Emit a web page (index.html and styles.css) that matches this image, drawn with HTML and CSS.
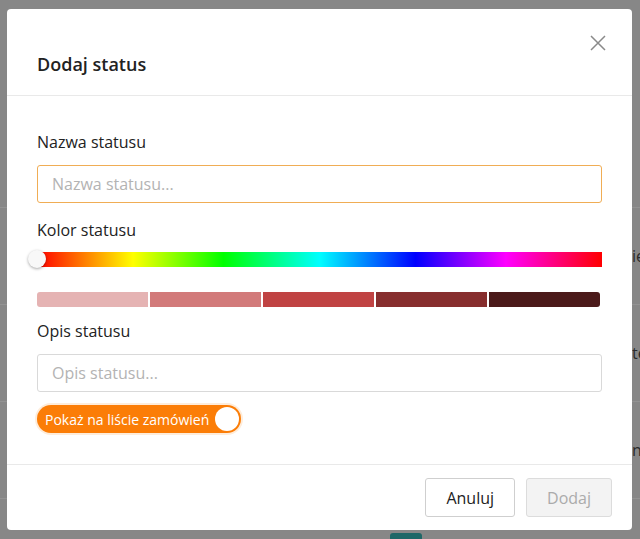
FILE: index.html
```html
<!DOCTYPE html>
<html lang="pl">
<head>
    <meta charset="UTF-8">
    <meta name="viewport" content="width=device-width, initial-scale=1.0">
    <title>Dodaj status</title>
    <link rel="stylesheet" href="styles.css">
</head>
<body>
    <!-- Page behind the overlay -->
    <div class="page">
        <div class="page-top"></div>
        <div class="page-row"><span class="row-text">ie</span></div>
        <div class="page-row"><span class="row-text">te</span></div>
        <div class="page-row"><span class="row-text">n</span></div>
        <div class="page-row last"><span class="row-badge"></span></div>
    </div>

    <!-- Modal -->
    <div class="modal">
        <div class="modal-header">
            <h2 class="modal-title">Dodaj status</h2>
            <button class="close-btn" aria-label="Zamknij">
                <svg width="16" height="16" viewBox="0 0 16 16">
                    <path d="M1 1L15 15M15 1L1 15" stroke="#8a8a8a" stroke-width="1.5" fill="none"/>
                </svg>
            </button>
        </div>

        <div class="modal-body">
            <label class="field-label" for="status_name">Nazwa statusu</label>
            <input class="field-input focused" type="text" id="status_name" placeholder="Nazwa statusu...">

            <label class="field-label">Kolor statusu</label>
            <div class="hue-slider">
                <span class="hue-knob"></span>
            </div>
            <div class="shades">
                <span class="shade" style="background:#e5b3b3"></span>
                <span class="shade" style="background:#d27a7a"></span>
                <span class="shade" style="background:#c04343"></span>
                <span class="shade" style="background:#872e2e"></span>
                <span class="shade" style="background:#4b1a1a"></span>
            </div>

            <label class="field-label" for="status_desc">Opis statusu</label>
            <input class="field-input" type="text" id="status_desc" placeholder="Opis statusu...">

            <div class="toggle">
                <span class="toggle-label">Pokaż na liście zamówień</span>
                <span class="toggle-knob"></span>
            </div>
        </div>

        <div class="modal-footer">
            <button class="btn">Anuluj</button>
            <button class="btn disabled" disabled>Dodaj</button>
        </div>
    </div>
</body>
</html>
```

FILE: styles.css
```css
/* General Styles */
body {
    font-family: "Open Sans", Arial, sans-serif;
    background-color: #878787;
    margin: 0;
    height: 539px;
    overflow: hidden;
    position: relative;
    color: #222;
}

/* Page behind overlay */
.page-top {
    height: 207px;
    border-bottom: 1px solid #939393;
}

.page-row {
    height: 96px;
    border-bottom: 1px solid #939393;
    display: flex;
    align-items: center;
}

.row-text {
    margin-left: 632px;
    font-size: 16px;
    color: #2a2a2a;
    white-space: nowrap;
}

.page-row.last {
    height: 42px;
    align-items: flex-start;
    border-bottom: none;
}

.row-badge {
    display: block;
    margin: 34px 0 0 390px;
    width: 32px;
    height: 8px;
    background-color: #1e6767;
    border-radius: 3px 3px 0 0;
}

/* Modal */
.modal {
    position: absolute;
    left: 7px;
    top: 9px;
    width: 625px;
    height: 521px;
    background-color: #fff;
    border-radius: 4px;
    display: flex;
    flex-direction: column;
}

.modal-header {
    display: flex;
    justify-content: space-between;
    align-items: flex-start;
    height: 86px;
    padding: 0 17px 0 30px;
    border-bottom: 1px solid #e9e9e9;
}

.modal-title {
    margin: 43px 0 0;
    font-size: 18px;
    line-height: 24px;
    font-weight: 600;
    color: #222;
}

.close-btn {
    margin-top: 17px;
    width: 34px;
    height: 34px;
    padding: 0;
    border: none;
    background: transparent;
    display: flex;
    align-items: center;
    justify-content: center;
    cursor: pointer;
}

.modal-body {
    padding: 35px 30px 30px;
    display: flex;
    flex-direction: column;
}

.field-label {
    display: block;
    font-size: 16px;
    line-height: 22px;
    color: #222;
    margin-bottom: 12px;
}

.field-input {
    height: 38px;
    padding: 0 14px;
    box-sizing: border-box;
    border: 1px solid #d9d9d9;
    border-radius: 3px;
    font-family: inherit;
    font-size: 16px;
    color: #222;
    margin-bottom: 16px;
    outline: none;
}

.field-input::placeholder {
    color: #b3b3b3;
}

.field-input.focused {
    border-color: #f0ad55;
}

.hue-slider {
    position: relative;
    height: 15px;
    margin: -1px 0 25px;
    background: linear-gradient(to right, #f00 0%, #ff0 17%, #0f0 33%, #0ff 50%, #00f 67%, #f0f 83%, #f00 100%);
}

.hue-knob {
    position: absolute;
    left: -9px;
    top: -2px;
    width: 18px;
    height: 18px;
    border-radius: 50%;
    background-color: #f8f8f8;
    box-shadow: 0 1px 3px rgba(0, 0, 0, 0.35);
}

.shades {
    display: flex;
    gap: 2px;
    height: 15px;
    margin-right: 2px;
    margin-bottom: 13px;
    border-radius: 3px;
    overflow: hidden;
}

.shade {
    flex: 1;
}

.field-input + .toggle {
    margin-top: -3px;
}

.toggle {
    align-self: flex-start;
    display: flex;
    align-items: center;
    gap: 6px;
    height: 28px;
    padding: 0 2px 0 8px;
    background-color: #fb7d07;
    border-radius: 14px;
    box-shadow: 0 0 0 2px rgba(251, 125, 7, 0.15);
}

.toggle-label {
    color: #fff;
    font-size: 14px;
    white-space: nowrap;
}

.toggle-knob {
    width: 24px;
    height: 24px;
    border-radius: 50%;
    background-color: #fff;
}

.modal-footer {
    margin-top: auto;
    border-top: 1px solid #e9e9e9;
    padding: 13px 20px 13px;
    display: flex;
    justify-content: flex-end;
    gap: 11px;
}

.btn {
    height: 39px;
    padding: 0 20px;
    font-family: inherit;
    font-size: 16px;
    color: #222;
    background-color: #fff;
    border: 1px solid #cfcfcf;
    border-radius: 3px;
    cursor: pointer;
}

.btn.disabled {
    background-color: #f3f3f3;
    border-color: #dcdcdc;
    color: #ababab;
    cursor: default;
}
```
